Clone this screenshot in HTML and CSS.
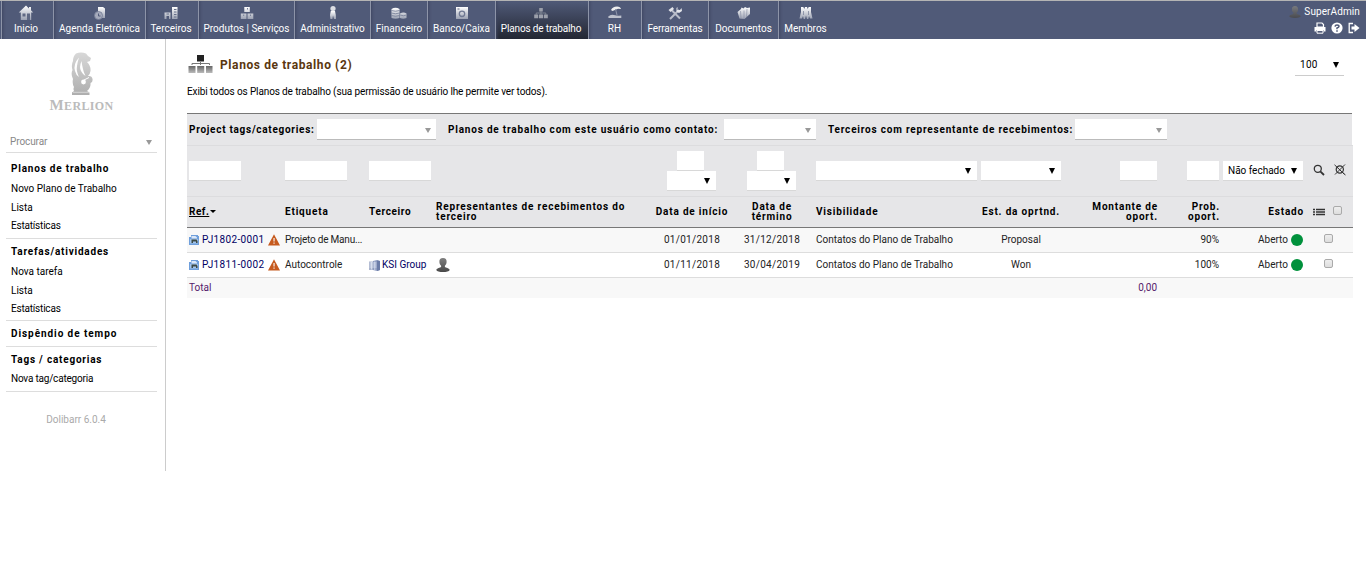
FILE: index.html
```html
<!DOCTYPE html>
<html lang="pt-BR">
<head>
<meta charset="utf-8">
<title>Planos de trabalho</title>
<link rel="stylesheet" href="styles.css">
</head>
<body>
<svg class="defs" width="0" height="0">
  <defs>
    <linearGradient id="silver" x1="0" y1="0" x2="0" y2="1"><stop offset="0" stop-color="#fff"/><stop offset="1" stop-color="#9ba1b2"/></linearGradient>
    <linearGradient id="dark" x1="0" y1="0" x2="0" y2="1"><stop offset="0" stop-color="#808080"/><stop offset="1" stop-color="#484848"/></linearGradient>
    <linearGradient id="lion" x1="0" y1="0" x2="0" y2="1"><stop offset="0" stop-color="#d8d8d8"/><stop offset="1" stop-color="#aeaeae"/></linearGradient>
    <linearGradient id="box" x1="0" y1="0" x2="0" y2="1"><stop offset="0" stop-color="#666"/><stop offset="1" stop-color="#bbb"/></linearGradient>
    <symbol id="warn" viewBox="0 0 12 12"><path d="M6 .3 12 11.500H0z" fill="#c65a1e"/><path d="M5.400 4h1.300v3.500H5.400zM5.400 8.600h1.300v1.200H5.400z" fill="#f5e6dc"/></symbol>
    <symbol id="proj" viewBox="0 0 10 10"><path d="M0 2h2V0h7v1h1v9H0z" fill="#6f9fdc"/><path d="M2.500 1h4L8 2.500v1h-5.500z" fill="#dbe8f8"/><path d="M1 4h8v4.500H1z" fill="#a3c5ec"/><path d="M2.500 4.500h5l1 1.500v2h-1.500V6.500H4V8H2.500z" fill="#3c4a45"/></symbol>
    <symbol id="user" viewBox="0 0 14 14"><path d="M7 0c2.600 0 3.800 1.500 3.600 4-.1 1.800-.8 2.900-1.700 3.700V9c1 .8 4.300 1 4.800 3-.5 1.400-3.300 2-6.700 2s-6.200-.6-6.700-2C.8 10 4.100 9.800 5.100 9V7.700C4.200 6.900 3.500 5.800 3.400 4 3.200 1.500 4.400 0 7 0z" fill="url(#dark)"/></symbol>
  </defs>
</svg>

<header class="topbar">
  <nav class="menu">
    <a class="tab m1"><svg viewBox="0 0 16 16"><path d="M8 .500 .800 7.500h2V15h10.400V7.500h2L13 5.300V2h-2v1.500z" fill="url(#silver)"/><path d="M4.500 8.500h3v3h-3zM9 8.500h3V15H9z" fill="#606984"/></svg><span>Inicio</span></a>
    <a class="tab m2"><svg viewBox="0 0 16 16"><path d="M6 2h5l2 1.500V13H6z" fill="url(#silver)"/><circle cx="6.500" cy="10.500" r="4" fill="#a5aabb" stroke="#737c95" stroke-width=".8"/><path d="M6.500 8.500V11h2" fill="none" stroke="#505a78"/></svg><span>Agenda Eletrônica</span></a>
    <a class="tab m3"><svg viewBox="0 0 16 16"><path d="M1.500 7.500h6V14H6v-3H3.500v3h-2zM9 2h5.500v12H9z" fill="url(#silver)"/><path d="M11 4.500h2.500M11 7h2.500M11 9.500h2.500M11 12h2.500M3.500 9h2.500" stroke="#67708a"/></svg><span>Terceiros</span></a>
    <a class="tab m4"><svg viewBox="0 0 16 16"><path d="M5.300 2h5.500v5H5.300zM1.800 8.500h5.700V14H1.800zM8.500 8.500h5.800V14H8.500z" fill="url(#silver)"/><path d="M8 3h1v1.500H8zM4.200 9.500h1v1.500h-1zM11 9.500h1v1.500h-1z" fill="#77809a"/></svg><span>Produtos | Serviços</span></a>
    <a class="tab m5"><svg viewBox="0 0 16 16"><circle cx="8" cy="3.500" r="2.600" fill="#dcdee4"/><path d="M5.800 6 5 10l.4 4h2L8 10.500 9 14h2l-.2-4L10 6z" fill="url(#silver)"/></svg><span>Administrativo</span></a>
    <a class="tab m6"><svg viewBox="0 0 16 16"><path d="M.500 4q4-2.500 8 0v9q-4 1.500-8 0zM9 8.500q3.500-2 6.500 0V13q-3.500 1.500-6.500 0z" fill="url(#silver)"/><path d="M.500 5.500q4 1.500 8 0M.500 8q4 1.500 8 0M.500 10.500q4 1.500 8 0M9 10q3.500 1.500 6.500 0" fill="none" stroke="#737c95" stroke-width=".8"/></svg><span>Financeiro</span></a>
    <a class="tab m7"><svg viewBox="0 0 16 16"><path d="M2 2h12v12H2z" fill="url(#silver)"/><path d="M3.500 4h2" stroke="#606984"/><circle cx="8" cy="8.800" r="2.700" fill="none" stroke="#707993" stroke-width="1.300"/></svg><span>Banco/Caixa</span></a>
    <a class="tab m8 active"><svg viewBox="0 0 16 16"><path d="M6.200 3h3.600v3.500H6.200zM1.200 9.500h4v3.700h-4zM6 9.500h4v3.700H6zM10.800 9.500h4v3.700h-4z" fill="#9b9faa"/><path d="M3.200 10V8h9.600v2M8 6v4" fill="none" stroke="#858a97" stroke-width=".9"/></svg><span>Planos de trabalho</span></a>
    <a class="tab m9"><svg viewBox="0 0 16 16"><path d="M4 5q1.500-3.500 6-3.500 3.500 0 4 2.500l-3-.3L5.500 6z" fill="#eee"/><path d="M8.500 4 10 10" stroke="#8f96ab"/><path d="M.800 12q3-3 6-2 4 1 7.500.500v2.500H2z" fill="#bdc1cc"/></svg><span>RH</span></a>
    <a class="tab m10"><svg viewBox="0 0 16 16"><path d="m4.500 5 8.500 8.500M12 5l-9 9" stroke="#b9bdc9" stroke-width="2"/><path d="m1.500 5 4-3 1.500 2-3.500 3zM10.500 2v3h2.500l1.500-2 .5 3-3 2-2.500-1.500V3z" fill="#e3e5ea"/></svg><span>Ferramentas</span></a>
    <a class="tab m11"><svg viewBox="0 0 16 16"><path d="M1.500 7 5 4l.500-1.500 2 1L9 2l2 1 3-.500V9l-5.500 5-5-.500z" fill="url(#silver)"/><path d="m4.500 6 .500 7.500M8 5.500V14M11 4l-.5 8" stroke="#848ba1" stroke-width=".6"/></svg><span>Documentos</span></a>
    <a class="tab m12"><svg viewBox="0 0 16 16"><path d="M3 2h2.300l1 2 .7-2h2l.7 2 1-2H13v5l1.500 6.500H12L11 11l-.7 3H9l-1-3.500L7 14H5.700L5 11l-1 2.500H1.500L3 7z" fill="url(#silver)"/><path d="M5.500 6v4M10.500 6v4" stroke="#7f879d" stroke-width=".8"/></svg><span>Membros</span></a>
  </nav>
  <div class="account">
    <div class="who"><svg class="i12" viewBox="0 0 14 14"><use href="#user"/></svg><span>SuperAdmin</span></div>
    <div class="tools">
      <svg viewBox="0 0 12 12"><path d="M3 5V1h5l1.500 1.500V5M3 5h6" fill="none" stroke="#fff" stroke-width="1.200"/><path d="M.5 5h11v4.500H9.500V8h-7v1.500h-2z" fill="#fff"/><path d="M3 8.500h6v2.700H3z" fill="none" stroke="#fff"/></svg>
      <svg viewBox="0 0 12 12"><circle cx="6" cy="6" r="5.600" fill="#fff"/><path d="M4 4.600Q4.200 3 6 3q2 0 2 1.600Q8 5.500 6 6v1.300" fill="none" stroke="#505a78" stroke-width="1.500"/><path d="M5.200 8.200h1.600v1.500H5.200z" fill="#505a78"/></svg>
      <svg viewBox="0 0 12 12"><path d="M5 1.500H1.200v9H5" fill="none" stroke="#fff" stroke-width="1.300"/><path d="M3.500 4.500h3V2L11.500 6l-5 4V7.500h-3z" fill="#fff"/></svg>
    </div>
  </div>
</header>

<div class="page">
  <aside class="side">
    <div class="logo">
      <svg viewBox="0 0 28 44"><path d="M8 1.500Q13-.3 18 1.500l2 2.500 3 2-1 3-3 1q4 4 3.500 9-.3 3-2.500 5 4-.5 4.500 3 .5 3-2 4 .5 5-3.500 8l2.500 1.500V43H4v-2.500l2-1.500q-1-2 0-4-2-3-1-8-2.500-5-.5-9Q3 13 5 9q0-5 3-7.500z" fill="url(#lion)"/><path d="M11 5.500Q5 12 7 19q1 4 4 6-3-6-2-11 .5-4 2-8.500zM13.500 9q-2.500 6-.5 10 1.500 3 4.500 5-2-4-2.500-7-1-4-1.500-8z" fill="#fff"/><circle cx="15.500" cy="30" r="2.400" fill="#fff"/><path d="m16 28 5-2.500" stroke="#fff"/><path d="M5 40.300h17" stroke="#eee" stroke-width=".6"/></svg>
      <div class="brand"><b>M</b>ERLION</div>
    </div>
    <div class="search"><span>Procurar</span><i class="tri small"></i></div>
    <section class="block b1"><h3>Planos de trabalho</h3><a>Novo Plano de Trabalho</a><a>Lista</a><a class="tight">Estatísticas</a></section>
    <section class="block b2"><h3>Tarefas/atividades</h3><a>Nova tarefa</a><a>Lista</a><a class="tight">Estatísticas</a></section>
    <section class="block b3"><h3 class="wide">Dispêndio de tempo</h3></section>
    <section class="block b4"><h3>Tags / categorias</h3><a class="tight">Nova tag/categoria</a></section>
    <div class="version">Dolibarr 6.0.4</div>
  </aside>

  <main class="main">
    <div class="titlebar">
      <svg class="tree" viewBox="0 0 25 20"><path d="M9 1h7v6.500H9z" fill="#222"/><path d="M4 11V9.500h17.500V11M12.500 8v3" fill="none" stroke="#777"/><path d="M.5 12h7v7h-7zM9.200 12h7v7h-7zM18 12h6.500v7H18z" fill="url(#box)"/></svg>
      <h1>Planos de trabalho (2)</h1>
      <div class="pager"><span>100</span><i class="tri"></i></div>
    </div>
    <p class="intro">Exibi todos os Planos de trabalho (sua permissão de usuário lhe permite ver todos).</p>

    <div class="filters">
      <label class="f1">Project tags/categories:</label><div class="combo c1"><i class="tri small"></i></div>
      <label class="f2">Planos de trabalho com este usuário como contato:</label><div class="combo c2"><i class="tri small"></i></div>
      <label class="f3">Terceiros com representante de recebimentos:</label><div class="combo c3"><i class="tri small"></i></div>
    </div>

    <div class="row inputs">
      <div><b class="in w52"></b></div><div><b class="in w62"></b></div><div><b class="in w62"></b></div><div></div>
      <div class="dates"><b class="in w27"></b><b class="in w49"><i class="tri"></i></b></div>
      <div class="dates"><b class="in w27"></b><b class="in w49"><i class="tri"></i></b></div>
      <div class="vis"><b class="in w161"><i class="tri"></i></b></div>
      <div><b class="in w80"><i class="tri"></i></b></div>
      <div class="r"><b class="in w37"></b></div><div class="r"><b class="in w32"></b></div>
      <div class="r"><b class="in w80"><span>Não fechado</span><i class="tri"></i></b></div>
      <div class="finders">
        <svg viewBox="0 0 12 12"><circle cx="4.800" cy="4.800" r="3.500" fill="none" stroke="#333" stroke-width="1.300"/><path d="m7.300 7.300 3.700 3.700" stroke="#333" stroke-width="1.800"/></svg>
        <svg viewBox="0 0 12 12"><circle cx="5.800" cy="5.500" r="3.600" fill="none" stroke="#333" stroke-width="1.200"/><path d="m8 8 3.500 3M.5.800l10 9.500M11 .500 1 10.500" stroke="#333" stroke-width="1"/></svg>
      </div>
    </div>

    <div class="row head">
      <div class="ref"><u>Ref.</u><i class="sort"></i></div><div>Etiqueta</div><div class="h3">Terceiro</div>
      <div>Representantes de recebimentos do<br>terceiro</div>
      <div class="c">Data de início</div><div class="c">Data de<br>término</div><div class="vis">Visibilidade</div>
      <div class="c">Est. da oprtnd.</div><div class="r">Montante de<br>oport.</div><div class="r">Prob.<br>oport.</div><div class="r">Estado</div>
      <div class="picks"><svg viewBox="0 0 12 8"><path d="M0 1.500h2M0 4h2M0 6.500h2M3 1.500h9M3 4h9M3 6.500h9" stroke="#333" stroke-width="1.400"/></svg><i class="check"></i></div>
    </div>

    <div class="row data odd">
      <div class="ref"><svg class="i10" viewBox="0 0 10 10"><use href="#proj"/></svg><a>PJ1802-0001</a><svg class="i12" viewBox="0 0 12 12"><use href="#warn"/></svg></div>
      <div class="tight">Projeto de Manu...</div><div></div><div></div>
      <div class="c date">01/01/2018</div><div class="c date">31/12/2018</div><div class="vis">Contatos do Plano de Trabalho</div>
      <div class="c">Proposal</div><div></div><div class="r">90%</div><div class="r status"><span>Aberto</span><i class="dot"></i></div><div class="c pick"><i class="check"></i></div>
    </div>
    <div class="row data">
      <div class="ref"><svg class="i10" viewBox="0 0 10 10"><use href="#proj"/></svg><a>PJ1811-0002</a><svg class="i12" viewBox="0 0 12 12"><use href="#warn"/></svg></div>
      <div>Autocontrole</div>
      <div class="firm"><svg class="i11" viewBox="0 0 11 11"><path d="M0 1.500h5v8.500H0z" fill="#aab4cd"/><path d="M4 1 8 0l3 1v9l-3 1-4-1z" fill="#8e9cc0"/><path d="M8 .500 11 1v9l-3 1z" fill="#6b7ca8"/><path d="M.500 3h7M.500 5h7M.500 7h7M2.500 2v7.500M5.800 1.500v8.500" stroke="#dfe6f4" stroke-width=".8"/></svg><a>KSI Group</a></div>
      <div><svg class="i14" viewBox="0 0 14 14"><use href="#user"/></svg></div>
      <div class="c date">01/11/2018</div><div class="c date">30/04/2019</div><div class="vis">Contatos do Plano de Trabalho</div>
      <div class="c">Won</div><div></div><div class="r">100%</div><div class="r status"><span>Aberto</span><i class="dot"></i></div><div class="c pick"><i class="check"></i></div>
    </div>
    <div class="row total"><div>Total</div><div></div><div></div><div></div><div></div><div></div><div></div><div></div><div class="r">0,00</div><div></div><div></div><div></div></div>
  </main>
</div>
</body>
</html>
```
FILE: styles.css
```css
* { box-sizing: border-box; }
body { margin: 0; background: #fff; color: #000; font: 10px/12px Roboto, sans-serif; overflow: hidden; }
svg { display: block; flex: none; }
.defs { position: absolute; }
a { text-decoration: none; white-space: nowrap; }
.tight { letter-spacing: -.2px; }

.topbar { display: flex; justify-content: space-between; height: 39px; background: #505a78; border-top: 1px solid #b4b4b4; color: #fff; }
.menu { display: flex; padding-left: 1px; }
.tab { display: flex; flex-direction: column; align-items: center; padding-top: 4px; border-left: 1px solid #8d94a8; box-shadow: inset 3px 0 3px -2px #3e4662; }
.tab svg { width: 16px; height: 16px; margin-bottom: 2px; }
.tab span { white-space: nowrap; }
.active { background: linear-gradient(#505a78, #232733); letter-spacing: -.15px; }
.m1 { width: 52px; padding-right: 3px; } .m2 { width: 92px; } .m3 { width: 53px; padding-right: 2px; } .m4 { width: 96px; }
.m5 { width: 76px; } .m6 { width: 57px; } .m7 { width: 68px; } .m8 { width: 93px; padding-right: 2px; }
.m9 { width: 53px; padding-right: 1px; } .m10 { width: 67px; letter-spacing: -.1px; } .m11 { width: 70px; } .m12 { width: 54px; }
.account { padding: 4px 6px 0 0; }
.who { display: flex; justify-content: flex-end; align-items: center; gap: 3px; height: 14px; letter-spacing: .1px; }
.who svg { opacity: .85; }
.tools { display: flex; justify-content: flex-end; gap: 5px; padding-top: 3px; }
.tools svg { width: 12px; height: 12px; }

.i10 { width: 10px; height: 10px; } .i11 { width: 11px; height: 11px; }
.i12 { width: 12px; height: 12px; } .i14 { width: 14px; height: 14px; }
.tri { flex: none; width: 0; height: 0; border: 3.500px solid transparent; border-top: 6px solid #000; border-bottom: 0; }
.tri.small { border-width: 5px 3px 0; border-top-color: #999; margin-top: 2px; }
.check { width: 9px; height: 9px; border: 1px solid #aaa; border-radius: 2px; background: linear-gradient(#eee, #ddd); margin-bottom: 3px; }

.page { display: flex; }
.side { width: 166px; height: 432px; border-right: 1px solid #ccc; padding: 13px 8px 0 6px; }
.logo { display: flex; flex-direction: column; align-items: center; height: 79px; }
.logo svg { width: 28px; height: 44px; }
.brand { font: bold 12px/16px "Liberation Serif", serif; color: #bbb; margin-top: 1px; letter-spacing: .35px; }
.brand b { font-size: 15px; }
.search { display: flex; align-items: center; justify-content: space-between; height: 22px; padding: 0 5px 0 4px; border-bottom: 1px solid #ddd; color: #888; letter-spacing: -.1px; }
.block { display: flex; flex-direction: column; padding-left: 5px; border-bottom: 1px solid #ddd; }
.block h3 { margin: 0; font-size: 10px; line-height: 20px; white-space: nowrap; letter-spacing: .79px; }
.block h3.wide { letter-spacing: .93px; }
.block a { line-height: 19px; }
.block a:last-child { line-height: 18px; }
.b1 { height: 86px; padding-top: 6px; } .b2 { height: 82px; padding-top: 3px; }
.b3 { height: 26px; padding-top: 3px; } .b4 { height: 45px; padding-top: 3px; }
.version { padding-top: 22px; text-align: center; color: #aaa; padding-right: 11px; }

.main { width: 1166px; margin-left: 21px; padding-top: 15px; }
.titlebar { display: flex; align-items: center; height: 20px; }
.tree { width: 25px; height: 20px; margin-left: 1px; }
h1 { margin: 1px 0 0 7px; font-size: 12px; line-height: 20px; color: #5a3710; letter-spacing: .6px; }
.pager { display: flex; align-items: center; justify-content: space-between; width: 49px; height: 21px; margin: 3px 9px 0 auto; padding: 0 5px; border-bottom: 1px solid #ccc; letter-spacing: .3px; }
.intro { margin: 12px 0 0; height: 27px; white-space: nowrap; letter-spacing: -.125px; }

.filters { display: flex; align-items: center; width: 1165px; height: 32px; background: #e6e6e8; border-top: 1px solid #777; padding-left: 2px; font-weight: bold; white-space: nowrap; letter-spacing: .8px; }
.f1 { width: 128px; letter-spacing: .72px; } .f2 { width: 275px; } .f3 { width: 247px; }
.combo { display: flex; align-items: center; justify-content: flex-end; height: 21px; padding-right: 5px; background: #fff; border-bottom: 1px solid #bbb; }
.c1 { width: 119px; margin-right: 12px; } .c2 { width: 92px; margin-right: 12px; } .c3 { width: 92px; }
.f2 { width: 276px; }

.row { display: grid; grid-template-columns: 96px 84px 67px 218px 80px 80px 167px 84px 96px 62px 84px 48px; align-items: center; }
.row > div { padding: 0 2px; white-space: nowrap; }
.row > .vis { padding-left: 4px; }
.row > .c { text-align: center; }
.row > .r { text-align: right; }
.inputs { height: 51px; background: #e6e6e8; border-top: 1px solid #dcdcde; }
.in { display: inline-flex; vertical-align: top; align-items: center; justify-content: space-between; height: 20px; padding: 0 6px 0 5px; background: #fff; border-bottom: 1px solid #d8d8d8; font-weight: normal; }
.in .tri { margin-left: auto; }
.w27 { width: 27px; } .w32 { width: 32px; } .w37 { width: 37px; } .w49 { width: 49px; }
.w52 { width: 52px; } .w62 { width: 62px; } .w80 { width: 80px; } .w161 { width: 161px; }
.row > .dates { display: flex; flex-direction: column; align-items: center; padding-right: 4px; }
.dates .w27 { margin-right: 2px; }
.row > .finders { display: flex; gap: 9px; padding: 0 0 2px 8px; }
.finders svg { width: 12px; height: 12px; }
.head { height: 32px; background: #e6e6e8; border-top: 1px solid #dcdcde; border-bottom: 1px solid #777; font-weight: bold; line-height: 10px; letter-spacing: .82px; }
.head .ref { letter-spacing: .5px; }
.head .h3 { letter-spacing: .65px; }
.row.head > .r { padding-right: 1px; }
.sort { display: inline-block; border: 3px solid transparent; border-top: 3px solid #000; border-bottom: 0; margin-left: 1px; vertical-align: 2px; }
.row > .picks { display: flex; align-items: center; gap: 8px; padding-left: 8px; }
.picks svg { width: 12px; height: 8px; }
.data { height: 25px; border-bottom: 1px solid #ddd; color: #222; }
.odd { background: #f8f8f8; }
.data a { color: #000064; }
.data .ref { display: flex; align-items: center; gap: 3px; letter-spacing: .36px; }
.date { letter-spacing: .3px; }
.firm { display: flex; align-items: center; gap: 2px; }
.status { display: flex; justify-content: flex-end; align-items: center; gap: 3px; }
.dot { width: 12px; height: 12px; border-radius: 50%; background: #00913c; }
.row > .pick { display: flex; justify-content: center; padding-right: 4px; }
.total { height: 20px; background: #f8f8f8; color: #551a6b; }
```
